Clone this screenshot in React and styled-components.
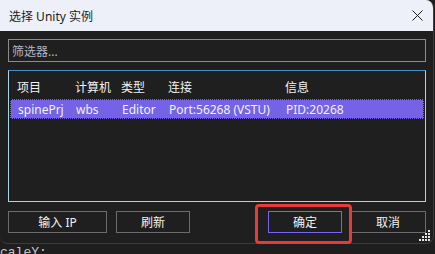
import React from 'react';
import styled, { createGlobalStyle } from 'styled-components';

const GlobalStyle = createGlobalStyle`
  html, body {
    margin: 0;
    padding: 0;
    background: #1e1e1e;
    overflow: hidden;
  }
`;

const uiFont = `"Segoe UI", "Noto Sans", "Noto Sans CJK SC", sans-serif`;

const Screen = styled.div`
  position: relative;
  width: 435px;
  height: 254px;
  background: #1e1e1e;
  overflow: hidden;
  font-family: ${uiFont};
`;

const Dialog = styled.div`
  position: relative;
  width: 434px;
  height: 244px;
  box-sizing: border-box;
  background: #1f1f1f;
  border: 1px solid #3c3c3c;
  border-left: none;
  border-top: none;
  border-radius: 0 8px 8px 8px;
  overflow: hidden;
  display: flex;
  flex-direction: column;
`;

const TitleBar = styled.div`
  height: 31px;
  flex: none;
  background: #eef0f9;
  display: flex;
  align-items: center;
  justify-content: space-between;
  padding: 0 9px 0 9px;
  color: #1b1b1b;
  font-size: 12px;
`;

const Close = styled.svg`
  width: 11px;
  height: 11px;
  margin-right: 1px;
`;

const Body = styled.div`
  flex: 1;
  display: flex;
  flex-direction: column;
  padding: 8px 7px 0 8px;
`;

const Filter = styled.div`
  height: 23px;
  box-sizing: border-box;
  border: 1px solid #8c8c8c;
  display: flex;
  align-items: center;
  padding-left: 3px;
  color: #b4b4c4;
  font-size: 12px;
`;

const ListBox = styled.div`
  margin-top: 8px;
  height: 132px;
  box-sizing: border-box;
  border: 1px solid #a8d4ee;
  border-top-color: #4a8ecb;
  padding: 6px 1px 0 1px;
`;

const Row = styled.div`
  display: grid;
  grid-template-columns: 58px 46px 47px 117px 1fr;
  align-items: center;
  height: ${p => (p.$head ? '19px' : '20px')};
  padding-left: 6px;
  box-sizing: border-box;
  font-size: 12px;
  color: #f2f2f2;
  background: ${p => (p.$selected ? '#7562e6' : 'transparent')};
  border: 1px ${p => (p.$selected ? 'dotted #1a1a1a' : 'solid transparent')};
  margin-top: ${p => (p.$selected ? '3px' : '0')};
  white-space: nowrap;
`;

const Cell = styled.span`
  padding-left: ${p => (p.$shift ? '1px' : '0')};
`;

const Buttons = styled.div`
  margin-top: 9px;
  display: flex;
  align-items: center;
`;

const Button = styled.div`
  width: ${p => p.$w}px;
  height: 22px;
  box-sizing: border-box;
  margin-left: ${p => p.$gap || 0}px;
  border: 1px solid ${p => (p.$primary ? '#7766f2' : '#6c6c6c')};
  display: flex;
  align-items: center;
  justify-content: center;
  color: #f2f2f2;
  font-size: 12px;
`;

const Spacer = styled.div`
  flex: 1;
`;

const Grip = styled.svg`
  position: absolute;
  right: 2px;
  bottom: 1px;
  width: 12px;
  height: 12px;
`;

const Highlight = styled.div`
  position: absolute;
  left: 255px;
  top: 204px;
  width: 97px;
  height: 40px;
  box-sizing: border-box;
  border: 3px solid #e83a3a;
  border-radius: 4px;
`;

const EditorLine = styled.div`
  margin-top: 1px;
  font-family: "Liberation Mono", "DejaVu Sans Mono", monospace;
  font-size: 13px;
  line-height: 16px;
  color: #c8c8c8;
  white-space: pre;
`;

const columns = ['项目', '计算机', '类型', '连接', '信息'];
const instance = ['spinePrj', 'wbs', 'Editor', 'Port:56268 (VSTU)', 'PID:20268'];

export default function App() {
  return (
    <Screen>
      <GlobalStyle />
      <Dialog>
        <TitleBar>
          <span>选择 Unity 实例</span>
          <Close viewBox="0 0 11 11">
            <path d="M0.5 0.5 L10.5 10.5 M10.5 0.5 L0.5 10.5" stroke="#1b1b1b" strokeWidth="1" fill="none" />
          </Close>
        </TitleBar>
        <Body>
          <Filter>筛选器...</Filter>
          <ListBox>
            <Row $head>
              {columns.map(c => (
                <Cell key={c}>{c}</Cell>
              ))}
            </Row>
            <Row $selected>
              {instance.map(c => (
                <Cell key={c} $shift>{c}</Cell>
              ))}
            </Row>
          </ListBox>
          <Buttons>
            <Button $w={99}>输入 IP</Button>
            <Button $w={74} $gap={9}>刷新</Button>
            <Spacer />
            <Button $w={74} $primary>确定</Button>
            <Button $w={76} $gap={8}>取消</Button>
          </Buttons>
        </Body>
        <Grip viewBox="0 0 12 12">
          {[[9, 0], [6, 3], [9, 3], [3, 6], [6, 6], [9, 6], [0, 9], [3, 9], [6, 9], [9, 9]].map(([x, y]) => (
            <rect key={`${x}-${y}`} x={x} y={y} width="2" height="2" fill="#e6e6e6" />
          ))}
        </Grip>
      </Dialog>
      <EditorLine>caleY:</EditorLine>
      <Highlight />
    </Screen>
  );
}
